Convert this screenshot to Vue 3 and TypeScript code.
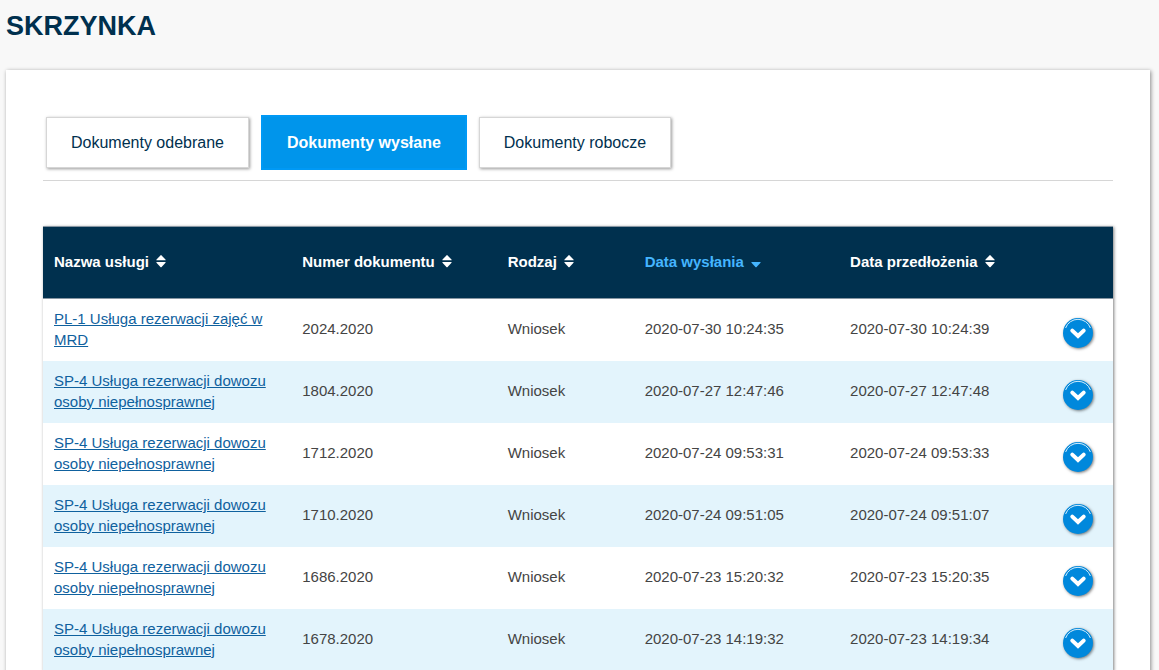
<script setup lang="ts">
import { ref } from 'vue'

interface Column {
  key: string
  label: string
}

interface DocumentRow {
  service: string
  number: string
  kind: string
  sent: string
  submitted: string
}

const tabs: string[] = ['Dokumenty odebrane', 'Dokumenty wysłane', 'Dokumenty robocze']
const activeTab = ref<number>(1)
const sortedBy = ref<string>('sent')

const columns: Column[] = [
  { key: 'service', label: 'Nazwa usługi' },
  { key: 'number', label: 'Numer dokumentu' },
  { key: 'kind', label: 'Rodzaj' },
  { key: 'sent', label: 'Data wysłania' },
  { key: 'submitted', label: 'Data przedłożenia' },
]

const transport = 'SP-4 Usługa rezerwacji dowozu osoby niepełnosprawnej'

const rows: DocumentRow[] = [
  { service: 'PL-1 Usługa rezerwacji zajęć w MRD', number: '2024.2020', kind: 'Wniosek', sent: '2020-07-30 10:24:35', submitted: '2020-07-30 10:24:39' },
  { service: transport, number: '1804.2020', kind: 'Wniosek', sent: '2020-07-27 12:47:46', submitted: '2020-07-27 12:47:48' },
  { service: transport, number: '1712.2020', kind: 'Wniosek', sent: '2020-07-24 09:53:31', submitted: '2020-07-24 09:53:33' },
  { service: transport, number: '1710.2020', kind: 'Wniosek', sent: '2020-07-24 09:51:05', submitted: '2020-07-24 09:51:07' },
  { service: transport, number: '1686.2020', kind: 'Wniosek', sent: '2020-07-23 15:20:32', submitted: '2020-07-23 15:20:35' },
  { service: transport, number: '1678.2020', kind: 'Wniosek', sent: '2020-07-23 14:19:32', submitted: '2020-07-23 14:19:34' },
]
</script>

<template>
  <main class="page">
    <h1 class="title">SKRZYNKA</h1>
    <section class="card">
      <nav class="tabs">
        <button
          v-for="(tab, i) in tabs"
          :key="tab"
          type="button"
          class="tab"
          :class="{ active: i === activeTab }"
          @click="activeTab = i"
        >{{ tab }}</button>
      </nav>
      <table class="documents">
        <colgroup>
          <col class="col-service">
          <col class="col-number">
          <col class="col-kind">
          <col class="col-date">
          <col class="col-date">
          <col>
        </colgroup>
        <thead>
          <tr>
            <th v-for="column in columns" :key="column.key" scope="col">
              <button
                type="button"
                class="sort"
                :class="{ sorted: column.key === sortedBy }"
                @click="sortedBy = column.key"
              >
                <span>{{ column.label }}</span>
                <svg class="sort-icon" viewBox="0 0 10 14" aria-hidden="true">
                  <path v-if="column.key !== sortedBy" d="M0.8 6.3 Q0 6.3 0.5 5.4 L4.4 1.4 Q5 0.8 5.6 1.4 L9.5 5.4 Q10 6.3 9.2 6.3 Z" />
                  <path d="M0.8 8 Q0 8 0.5 8.8 L4.4 12.9 Q5 13.5 5.6 12.9 L9.5 8.8 Q10 8 9.2 8 Z" />
                </svg>
              </button>
            </th>
            <td></td>
          </tr>
        </thead>
        <tbody>
          <tr v-for="row in rows" :key="row.number">
            <td class="service"><a href="#">{{ row.service }}</a></td>
            <td>{{ row.number }}</td>
            <td>{{ row.kind }}</td>
            <td>{{ row.sent }}</td>
            <td>{{ row.submitted }}</td>
            <td class="action">
              <button type="button" class="expand" :aria-label="'Rozwiń ' + row.number">
                <svg viewBox="0 0 30 30" aria-hidden="true">
                  <path class="rim" d="M2.6 10 A13.2 13.2 0 0 1 27.4 10" />
                  <path class="chevron" d="M9.3 12.6 L15 18 L20.7 12.6" />
                </svg>
              </button>
            </td>
          </tr>
        </tbody>
      </table>
    </section>
  </main>
</template>

<style>
body {
  background: #f8f8f8;
}
</style>

<style scoped>
.page {
  box-sizing: border-box;
  height: 100vh;
  overflow: hidden;
  padding: 9px 9px 0 6px;
  background: #f8f8f8;
  color: #444;
  font-family: "Liberation Sans", Arial, sans-serif;
  font-size: 15px;
  line-height: 21px;
}

.title {
  margin: 0 0 27px;
  color: #00304e;
  font-size: 27px;
  line-height: 34px;
}

.card {
  padding: 45px 37px 40px;
  background: #fff;
  box-shadow: 1px 1px 4px rgba(0, 0, 0, 0.45);
}

.tabs {
  display: flex;
  align-items: center;
  gap: 12px;
  margin-bottom: 45px;
  padding: 0 3px 10px;
  border-bottom: 1px solid #d6d6d6;
}

.tab {
  height: 51px;
  padding: 0 24px;
  border: 1px solid #d6d6d6;
  background: #fff;
  box-shadow: 1px 1px 3px rgba(0, 0, 0, 0.4);
  color: #00304e;
  font: 16px "Liberation Sans", Arial, sans-serif;
  cursor: pointer;
}

.tab.active {
  height: 55px;
  border: 2px solid #0099f5;
  background: #0095eb;
  box-shadow: none;
  color: #fff;
  font-weight: bold;
}

.documents {
  width: 100%;
  table-layout: fixed;
  border-spacing: 0;
  box-shadow: 1px 1px 3px rgba(0, 0, 0, 0.5);
}

.col-service {
  width: 23.2%;
}

.col-number {
  width: 19.2%;
}

.col-kind {
  width: 12.8%;
}

.col-date {
  width: 19.2%;
}

thead tr {
  height: 73px;
  background: #00304e;
}

th,
td {
  padding: 9px 11px 13px;
  text-align: left;
  vertical-align: middle;
}

th {
  padding: 10px 11px;
}

thead th,
thead td {
  box-shadow: inset 0 1px 0 #8796a3, inset 0 -1px 0 #8796a3;
}

td.service {
  padding: 9px 11px 11px;
}

.sort {
  display: flex;
  align-items: center;
  gap: 7px;
  padding: 0 0 3px;
  border: 0;
  background: none;
  color: #fff;
  font: bold 15px "Liberation Sans", Arial, sans-serif;
  white-space: nowrap;
  cursor: pointer;
}

.sort.sorted {
  color: #45b5ff;
}

.sort-icon {
  width: 10px;
  height: 14px;
  fill: currentColor;
}

tbody tr:nth-child(even) {
  background: #e3f4fc;
}

tbody tr {
  height: 62px;
}

a {
  color: #0f619e;
  text-decoration: underline;
}

td.action {
  padding: 6px 18px 0;
}

.expand {
  display: block;
  width: 30px;
  height: 30px;
  padding: 0;
  border: 0;
  border-radius: 50%;
  background: #0088dc;
  box-shadow: 1px 1px 3px rgba(0, 0, 0, 0.5);
  cursor: pointer;
}

.expand svg {
  display: block;
  width: 30px;
  height: 30px;
  fill: none;
}

.rim {
  stroke: #d5edfb;
  stroke-width: 1;
}

.chevron {
  stroke: #fff;
  stroke-width: 4;
  stroke-linecap: round;
}
</style>
